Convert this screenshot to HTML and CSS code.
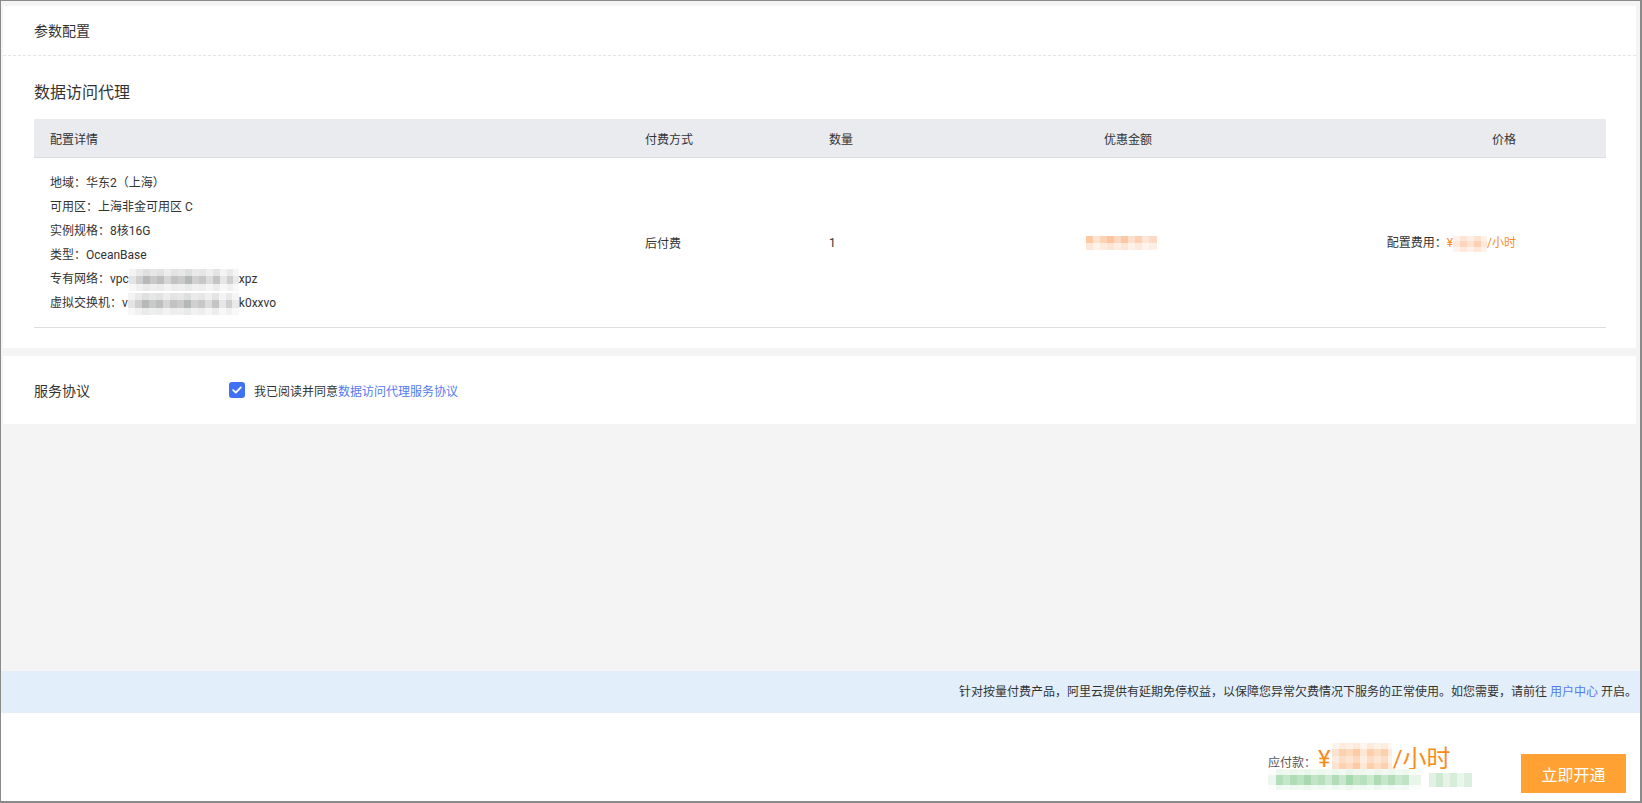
FILE: index.html
```html
<!DOCTYPE html>
<html lang="zh-CN">
<head>
    <meta charset="UTF-8">
    <meta name="viewport" content="width=device-width, initial-scale=1.0">
    <title>参数配置 - 数据访问代理</title>
    <link rel="stylesheet" href="styles.css">
</head>
<body>
    <div class="frame">
        <div class="content">
            <section class="panel config">
                <div class="panel-head">参数配置</div>
                <div class="panel-body">
                    <h3 class="section-title">数据访问代理</h3>
                    <div class="order-table">
                        <div class="row head">
                            <div class="cell">配置详情</div>
                            <div class="cell">付费方式</div>
                            <div class="cell">数量</div>
                            <div class="cell center">优惠金额</div>
                            <div class="cell right">价格</div>
                        </div>
                        <div class="row body">
                            <div class="cell detail">
                                <div>地域：华东2（上海）</div>
                                <div>可用区：上海非金可用区 C</div>
                                <div>实例规格：8核16G</div>
                                <div>类型：OceanBase</div>
                                <div>专有网络：vpc<span class="mosaic mosaic-vpc"></span>xpz</div>
                                <div>虚拟交换机：v<span class="mosaic mosaic-vsw"></span>k0xxvo</div>
                            </div>
                            <div class="cell">后付费</div>
                            <div class="cell">1</div>
                            <div class="cell center discount"><span class="mosaic mosaic-discount"></span></div>
                            <div class="cell right">配置费用：<span class="price">¥<span class="mosaic mosaic-unit"></span>/小时</span></div>
                        </div>
                    </div>
                </div>
            </section>
            <section class="panel agreement">
                <div class="agree-label">服务协议</div>
                <label class="agree-check">
                    <span class="checkbox">
                        <svg width="10" height="8" viewBox="0 0 10 8"><path d="M1.2 4.2 L3.8 6.6 L8.8 1.4" fill="none" stroke="#fff" stroke-width="1.8" stroke-linecap="round" stroke-linejoin="round"/></svg>
                    </span>
                    我已阅读并同意<a href="#" class="link">数据访问代理服务协议</a>
                </label>
            </section>
        </div>
        <div class="notice">
            针对按量付费产品，阿里云提供有延期免停权益，以保障您异常欠费情况下服务的正常使用。如您需要，请前往 <a href="#" class="link">用户中心</a> 开启。
        </div>
        <div class="footer">
            <div class="pay">
                <div class="pay-line">
                    <span class="pay-label">应付款：</span><span class="pay-price">¥<span class="mosaic mosaic-total"></span>/小时</span>
                </div>
                <div class="pay-sub">
                    <span class="mosaic mosaic-green"></span><span class="mosaic mosaic-green-light"></span>
                </div>
            </div>
            <button class="buy-btn">立即开通</button>
        </div>
    </div>
</body>
</html>
```

FILE: styles.css
```css
html, body {
    margin: 0;
    padding: 0;
}
body {
    font-family: Roboto, "Noto Sans CJK SC", sans-serif;
    font-size: 12px;
    color: #333;
    background: #fff;
}
.frame {
    box-sizing: border-box;
    width: 1642px;
    height: 803px;
    border: 1px solid #8a8a8a;
    border-right-width: 2px;
    border-bottom-width: 2px;
    display: flex;
    flex-direction: column;
}
.content {
    flex: 1;
    background: #f4f4f4;
    padding: 5px 4px 0 2px;
}
.panel {
    background: #fff;
}
.panel-head {
    padding: 14px 31px 13px;
    font-size: 14px;
    line-height: 22px;
    border-bottom: 1px dashed #e4e4e4;
}
.panel-body {
    padding: 25px 30px 20px 31px;
}
.section-title {
    margin: 0 0 14px;
    font-size: 16px;
    font-weight: normal;
    line-height: 24px;
}
.row {
    display: grid;
    grid-template-columns: 595px 184px 187px 256px 1fr;
}
.row.head {
    height: 38px;
    background: #eaebee;
    border-bottom: 1px solid #dcdde0;
    align-items: center;
}
.row.body {
    border-bottom: 1px solid #dedede;
    align-items: center;
}
.cell {
    padding-left: 16px;
}
.cell.center {
    padding-left: 0;
    text-align: center;
}
.cell.discount {
    padding-right: 14px;
}
.cell.right {
    padding-left: 0;
    padding-right: 90px;
    text-align: right;
}
.detail {
    padding-top: 13px;
    padding-bottom: 12px;
    line-height: 24px;
}
.price {
    color: #fa8c1e;
}
.mosaic {
    display: inline-block;
    vertical-align: middle;
}
.mosaic-vpc,
.mosaic-vsw {
    width: 110px;
    height: 22px;
    background:
        linear-gradient(180deg, rgba(255,255,255,.55) 0 7px, rgba(255,255,255,0) 7px 15px, rgba(255,255,255,.7) 15px),
        linear-gradient(90deg, #e4e4e4 0 7px, #cfcfcf 7px 14px, #b7b9b9 14px 21px, #c9c9c9 21px 28px, #bdbfbf 28px 35px, #d6d6d6 35px 42px, #c2c2c2 42px 49px, #cacaca 49px 56px, #b5b8b8 56px 63px, #d0d0d0 63px 70px, #c7c7c7 70px 77px, #dcdcdc 77px 84px, #c4c4c4 84px 91px, #e6e6e6 91px 98px, #cfcfcf 98px 104px, #e9e9e9 104px);
}
.mosaic-vsw {
    width: 111px;
}
.mosaic-discount {
    width: 71px;
    height: 14px;
    background:
        linear-gradient(180deg, rgba(255,255,255,0) 0 7px, rgba(255,255,255,.55) 7px),
        linear-gradient(90deg, #fcc9a3 0 7px, #fde4d2 7px 14px, #fbd2b4 14px 21px, #fcc39c 21px 28px, #fcd8c0 28px 35px, #fbc8a4 35px 42px, #fde0cc 42px 49px, #fcd0b2 49px 56px, #fde6d6 56px 63px, #fcdac4 63px);
}
.mosaic-unit {
    width: 34px;
    height: 16px;
    background:
        linear-gradient(180deg, rgba(255,255,255,.4) 0 5px, rgba(255,255,255,0) 5px 11px, rgba(255,255,255,.5) 11px),
        linear-gradient(90deg, #fde9dc 0 7px, #fcd5bc 7px 14px, #fde2d0 14px 21px, #fcd0b4 21px 28px, #fde8da 28px);
}
.agreement {
    margin-top: 8px;
    height: 68px;
    padding: 0 31px;
    display: flex;
    align-items: center;
}
.agree-label {
    width: 195px;
    font-size: 14px;
}
.agree-check {
    display: flex;
    align-items: center;
    cursor: pointer;
}
.checkbox {
    width: 16px;
    height: 16px;
    border-radius: 3px;
    background: #3f72f2;
    margin-right: 9px;
    display: flex;
    align-items: center;
    justify-content: center;
}
.link {
    color: #5479f0;
    text-decoration: none;
}
.notice {
    height: 42px;
    line-height: 42px;
    background: #e2effb;
    text-align: right;
    padding-right: 3px;
}
.footer {
    height: 88px;
    box-sizing: border-box;
    padding: 32px 14px 0 0;
    display: flex;
    justify-content: flex-end;
    align-items: flex-start;
}
.pay {
    width: 253px;
}
.pay-line {
    height: 28px;
    line-height: 28px;
    white-space: nowrap;
}
.pay-label {
    color: #555;
    font-size: 12px;
}
.pay-price {
    color: #fa8c1e;
    font-size: 24px;
    margin-left: 2px;
}
.mosaic-total {
    width: 60px;
    height: 32px;
    margin: -4px 1px 0;
    background:
        linear-gradient(180deg, rgba(255,255,255,.6) 0 6px, rgba(255,255,255,0) 6px 13px, rgba(255,255,255,.3) 13px 20px, rgba(255,255,255,0) 20px 26px, rgba(255,255,255,.6) 26px),
        linear-gradient(90deg, #fde3cf 0 7px, #fcd1ae 7px 14px, #fdd9bd 14px 21px, #fccaa3 21px 28px, #fde6d4 28px 35px, #fcceaa 35px 42px, #fddcc2 42px 49px, #fccfad 49px 56px, #fdebdd 56px);
}
.pay-sub {
    margin-top: -4px;
    height: 21px;
    display: flex;
    align-items: center;
}
.mosaic-green {
    width: 153px;
    height: 21px;
    background:
        linear-gradient(180deg, rgba(255,255,255,.75) 0 6px, rgba(255,255,255,0) 6px 16px, rgba(255,255,255,.8) 16px),
        linear-gradient(90deg, #eef7ef 0 8px, #b2dfb9 8px 15px, #c4e6c9 15px 22px, #aedcb5 22px 29px, #bce3c2 29px 36px, #a9daaf 36px 43px, #c2e5c7 43px 50px, #b5e0bb 50px 57px, #cde9d1 57px 64px, #b0dcb6 64px 71px, #c8e7cc 71px 78px, #a6d9ad 78px 85px, #bfe4c4 85px 92px, #b7e1bd 92px 99px, #cceace 99px 106px, #aedbb4 106px 113px, #c6e6ca 113px 120px, #b3deb9 120px 127px, #c9e8cd 127px 134px, #bfe3c4 134px 141px, #e8f5ea 141px);
}
.mosaic-green-light {
    width: 43px;
    height: 14px;
    margin-left: 8px;
    background: linear-gradient(90deg, #e1f2e4 0 7px, #cfead3 7px 14px, #e6f4e8 14px 21px, #d6edd9 21px 28px, #e9f6eb 28px 35px, #dbefde 35px);
}
.buy-btn {
    margin-top: 9px;
    width: 105px;
    height: 39px;
    border: none;
    border-radius: 0;
    background: #ffa133;
    color: #fff;
    font-family: inherit;
    font-size: 16px;
    cursor: pointer;
    padding: 0;
}
.buy-btn:hover {
    background: #f5951f;
}
```
